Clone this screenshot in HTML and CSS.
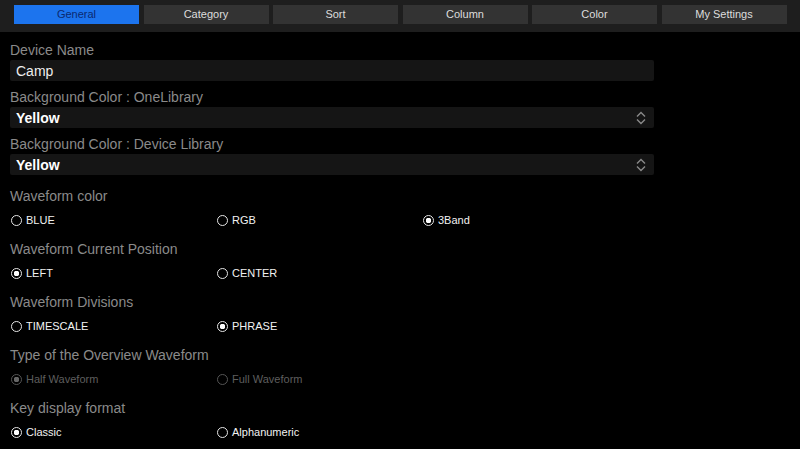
FILE: index.html
```
<!DOCTYPE html>
<html>
  <head>
    <meta charset="utf-8" />
    <link rel="stylesheet" href="styles.css">
  </head>

  <body>
    <nav class="tabs">
      <div class="tab active">General</div>
      <div class="tab">Category</div>
      <div class="tab">Sort</div>
      <div class="tab">Column</div>
      <div class="tab">Color</div>
      <div class="tab">My Settings</div>
    </nav>

    <main class="settings">
      <div class="field">
        <div class="label">Device Name</div>
        <input class="text-input" type="text" value="Camp" />
      </div>

      <div class="field">
        <div class="label">Background Color : OneLibrary</div>
        <div class="select">
          <span>Yellow</span>
          <svg class="arrows" width="10" height="14" viewBox="0 0 10 14">
            <path d="M1 5.5 L5 1.5 L9 5.5 M1 8.5 L5 12.5 L9 8.5" />
          </svg>
        </div>
      </div>

      <div class="field">
        <div class="label">Background Color : Device Library</div>
        <div class="select">
          <span>Yellow</span>
          <svg class="arrows" width="10" height="14" viewBox="0 0 10 14">
            <path d="M1 5.5 L5 1.5 L9 5.5 M1 8.5 L5 12.5 L9 8.5" />
          </svg>
        </div>
      </div>

      <div class="group">
        <div class="label">Waveform color</div>
        <div class="options">
          <label class="option"><input type="radio" name="wcolor" />BLUE</label>
          <label class="option"><input type="radio" name="wcolor" />RGB</label>
          <label class="option"><input type="radio" name="wcolor" checked />3Band</label>
        </div>
      </div>

      <div class="group">
        <div class="label">Waveform Current Position</div>
        <div class="options">
          <label class="option"><input type="radio" name="wpos" checked />LEFT</label>
          <label class="option"><input type="radio" name="wpos" />CENTER</label>
        </div>
      </div>

      <div class="group">
        <div class="label">Waveform Divisions</div>
        <div class="options">
          <label class="option"><input type="radio" name="wdiv" />TIMESCALE</label>
          <label class="option"><input type="radio" name="wdiv" checked />PHRASE</label>
        </div>
      </div>

      <div class="group">
        <div class="label">Type of the Overview Waveform</div>
        <div class="options">
          <label class="option disabled"><input type="radio" name="wtype" checked disabled />Half Waveform</label>
          <label class="option disabled"><input type="radio" name="wtype" disabled />Full Waveform</label>
        </div>
      </div>

      <div class="group">
        <div class="label">Key display format</div>
        <div class="options">
          <label class="option"><input type="radio" name="keyfmt" checked />Classic</label>
          <label class="option"><input type="radio" name="keyfmt" />Alphanumeric</label>
        </div>
      </div>
    </main>
  </body>
</html>
```

FILE: styles.css
```
body {
  margin: 0;
  background-color: #000;
  font-family: "Liberation Sans", Arial, sans-serif;
  color: #eee;
  overflow: hidden;
}

.tabs {
  display: flex;
  gap: 4.5px;
  height: 32px;
  box-sizing: border-box;
  padding: 5px 0 0 14px;
  background-color: #1e1e1e;
}

.tab {
  width: 125px;
  height: 19px;
  line-height: 19px;
  text-align: center;
  font-size: 11px;
  color: #ddd;
  background-color: #333;
}

.tab.active {
  background-color: #1c74ee;
  color: #0b2a70;
}

.settings {
  width: 644px;
  padding: 9px 0 0 10px;
}

.label {
  font-size: 14px;
  line-height: 18px;
  color: #8a8a8a;
}

.field {
  margin-bottom: 7px;
}

.field .label {
  margin-bottom: 1px;
}

.text-input,
.select {
  display: block;
  box-sizing: border-box;
  width: 100%;
  height: 21px;
  margin: 0;
  padding: 0 8px 0 6px;
  border: none;
  border-radius: 2px;
  outline: none;
  background-color: #151515;
  font-family: inherit;
  font-size: 14px;
  color: #eee;
}

.select {
  display: flex;
  align-items: center;
  justify-content: space-between;
  font-weight: bold;
  color: #fff;
}

.arrows path {
  fill: none;
  stroke: #8a8a8a;
  stroke-width: 1.4;
}

.group {
  margin-top: 12px;
}

.group .label {
  margin-bottom: 7px;
}

.options {
  display: grid;
  grid-template-columns: repeat(3, 206px);
  height: 16px;
  margin-bottom: 12px;
  padding-left: 1px;
}

.option {
  display: flex;
  align-items: center;
  font-size: 11px;
  color: #f2f2f2;
}

.option.disabled {
  color: #5e5e5e;
}

.option input {
  appearance: none;
  box-sizing: border-box;
  width: 11px;
  height: 11px;
  margin: 0 4px 0 0;
  border: 1.3px solid #e6e6e6;
  border-radius: 50%;
  background-color: transparent;
}

.option input:checked {
  background: radial-gradient(circle, #fff 0 2.6px, transparent 3px);
}

.option input:disabled {
  border-color: #555;
}

.option input:disabled:checked {
  background: radial-gradient(circle, #666 0 2.6px, transparent 3px);
}
```
